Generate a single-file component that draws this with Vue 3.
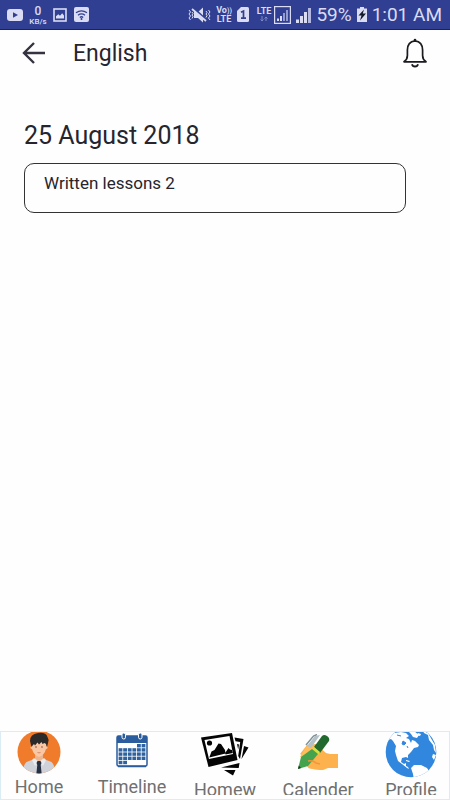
<script setup>
import { ref } from 'vue'

const entries = ref([
  { date: '25 August 2018', text: 'Written lessons 2' },
])

const tabs = [
  { id: 'home', label: 'Home' },
  { id: 'timeline', label: 'Timeline' },
  { id: 'homework', label: 'Homew' },
  { id: 'calender', label: 'Calender' },
  { id: 'profile', label: 'Profile' },
]

// day cells of the timeline icon, [first column, last column] per row
const dayRows = [[4, 5], [0, 5], [0, 5], [0, 5], [0, 1]]
const days = dayRows.flatMap(([from, to], row) =>
  Array.from({ length: to - from + 1 }, (_, i) => ({ x: 2.6 + (from + i) * 4.6, y: 12 + row * 4.2 })),
)
</script>

<template>
  <div class="app">
    <div class="status">
      <div class="status-left">
        <svg width="16" height="12" viewBox="0 0 16 12">
          <rect width="16" height="12" rx="3" fill="#d9dcf3" />
          <path d="M6 3.3 11 6 6 8.7z" fill="#313f92" />
        </svg>
        <div class="stack rate"><b>0</b><span>KB/s</span></div>
        <svg width="14" height="14" viewBox="0 0 14 14">
          <rect x="1" y="1" width="12" height="12" fill="none" stroke="#d9dcf3" stroke-width="1.6" />
          <path d="M3 10.5V8.3l2.3-2 1.7 1.4 2.2-2.5L11 7.5v3z" fill="#d9dcf3" />
        </svg>
        <svg width="15" height="15" viewBox="0 0 15 15">
          <rect width="15" height="15" rx="2" fill="#d9dcf3" />
          <g fill="none" stroke="#313f92" stroke-width="1.3">
            <path d="M2 5.8q5.5-4 11 0M4 8.2q3.5-2.6 7 0M5.8 10.4q1.7-1.3 3.4 0" />
          </g>
          <circle cx="7.5" cy="11.9" r="1" fill="#313f92" />
        </svg>
      </div>
      <div class="status-right">
        <svg width="23" height="16" viewBox="0 0 23 16">
          <path d="M6 5h4l5-4.500v15L10 11H6z" fill="#d9dcf3" />
          <path d="m5 1 14 13" stroke="#313f92" stroke-width="2.6" />
          <path d="m4 2 14 12" stroke="#d9dcf3" stroke-width="1.8" />
          <path d="m1 3 1.500 2L1 7l1.500 2L1 11l1.500 2M4 5l1 1.500L4 8l1 1.500-1 2M18 4l1 1.500L18 7l1 1.500-1 2M20.500 3 22 5l-1.500 2L22 9l-1.500 2 1.500 2" fill="none" stroke="#d9dcf3" />
        </svg>
        <div class="stack"><b>Vo<i>))</i></b><b>LTE</b></div>
        <svg class="sim" width="12" height="15" viewBox="0 0 12 15">
          <path d="M4 0h6.500Q12 0 12 1.500v12q0 1.500-1.500 1.500h-9Q0 15 0 13.500V4z" fill="#d9dcf3" />
          <path d="M4 5.200 6.500 4v7M4 11.200h5" fill="none" stroke="#313f92" stroke-width="1.7" />
        </svg>
        <div class="stack">
          <b>LTE</b>
          <svg width="10" height="7" viewBox="0 0 10 7">
            <path d="M3 1v5M1.500 4.500 3 6l1.500-1.500M7 6V2M5.500 3.500 7 2l1.500 1.500" fill="none" stroke="#7f88c4" />
          </svg>
        </div>
        <svg class="boxed" width="17" height="18" viewBox="0 0 17 18">
          <rect x=".6" y=".6" width="15.8" height="16.8" fill="none" stroke="#d9dcf3" stroke-width="1.2" />
          <path d="M3 12.500h2V15H3zM6 10h2v5H6z" fill="#d9dcf3" />
          <path d="M9 7h2v8H9zM12 4h2v11h-2z" fill="#929bd0" />
        </svg>
        <svg width="15" height="16" viewBox="0 0 15 16">
          <path d="M0 12.500h3V16H0zM4 9h3v7H4zM8 5h3v11H8z" fill="#d9dcf3" />
          <path d="M12 1h3v15h-3z" fill="#b2b8e2" />
        </svg>
        <span class="big">59%</span>
        <svg width="10" height="15" viewBox="0 0 10 15">
          <path d="M3 0h4v1.500h3V15H0V1.500h3z" fill="#d9dcf3" />
          <path d="M7 2.500 1.500 8.500h3L3 13.500l6-7H5.800z" fill="#111a28" />
        </svg>
        <span class="big">1:01 AM</span>
      </div>
    </div>

    <header class="topbar">
      <button class="icon-btn" type="button" aria-label="Back">
        <svg width="24" height="24" viewBox="0 0 24 24">
          <path d="M12 2 2 12l10 10M2 12h21" fill="none" stroke="#35333f" stroke-width="2.4" />
        </svg>
      </button>
      <h1>English</h1>
      <button class="icon-btn" type="button" aria-label="Notifications">
        <svg width="26" height="30" viewBox="0 0 26 30">
          <path d="M13 2.800C7.500 3.500 5.400 7.200 5.400 12v5.500c0 3-1 4.600-3.400 6.300h22c-2.400-1.700-3.400-3.300-3.400-6.300V12c0-4.800-2.100-8.500-7.600-9.200z" fill="none" stroke="#1b1b20" stroke-width="1.7" stroke-linejoin="round" />
          <circle cx="13" cy="2" r="1.3" fill="#1b1b20" />
          <path d="M10 26.200q.5 2.300 3 2.300t3-2.300" fill="none" stroke="#1b1b20" stroke-width="1.8" />
        </svg>
      </button>
    </header>

    <main>
      <section v-for="entry in entries" :key="entry.date">
        <h2>{{ entry.date }}</h2>
        <p class="card">{{ entry.text }}</p>
      </section>
    </main>

    <nav>
      <a v-for="tab in tabs" :key="tab.id" :href="'#' + tab.id" :class="tab.id">
        <span class="pic">
          <svg v-if="tab.id === 'home'" width="44" height="42" viewBox="0 0 44 42">
            <defs>
              <clipPath id="avatar"><circle cx="22" cy="20" r="21.5" /></clipPath>
            </defs>
            <g clip-path="url(#avatar)">
              <path d="M0 0h44v42H0z" fill="#ef7b2b" />
              <path d="M7 42v-8q1-4 5-5l6-2h8l6 2q4 1 5 5v8z" fill="#cfd2d8" />
              <path d="M18 21h8v6l-4 4-4-4z" fill="#edb48f" />
              <path d="m17 26 5 4-4 4-3-6zM27 26l-5 4 4 4 3-6z" fill="#e9ebef" />
              <path d="m20.500 29h3l1 2-.8 2 1 9h-5.400l1-9-.8-2z" fill="#273040" />
              <path d="M15 8h14v9q-1.500 6-7 8-5.500-2-7-8z" fill="#fac7a4" />
              <circle cx="15" cy="15.500" r="1.5" fill="#fac7a4" />
              <circle cx="29" cy="15.500" r="1.5" fill="#fac7a4" />
              <path d="M14.500 15 13 9q0-7 8-8 8-1 9.500 4 2 3 .5 6l-1 4-1-3-1.500-1-2 1-1-2-2.500 2.500-1.500-2-2.500 3-1-1.500-1 1z" fill="#2d2a2a" />
              <path d="M18 15h2M24 15h2" stroke="#8d5d43" />
              <path d="M20.500 20.500q1.500.8 3 0" fill="none" stroke="#d5866c" />
            </g>
          </svg>
          <svg v-else-if="tab.id === 'timeline'" width="32" height="36" viewBox="0 0 32 36">
            <rect x="1" y="4" width="30" height="30" rx="1.5" fill="#fff" stroke="#2a5c9e" stroke-width="1.5" />
            <path d="M1 4h30v7H1z" fill="#2a5c9e" />
            <path d="M2 34.500h28" stroke="#2a5c9e" stroke-width="1.5" />
            <rect x="6" y="1" width="3.5" height="6" rx="1.7" fill="#2a5c9e" stroke="#fff" />
            <rect x="22.5" y="1" width="3.5" height="6" rx="1.7" fill="#2a5c9e" stroke="#fff" />
            <rect v-for="(d, i) in days" :key="i" :x="d.x" :y="d.y" width="3.8" height="3.4" fill="#2d629f" />
          </svg>
          <svg v-else-if="tab.id === 'homework'" width="48" height="44" viewBox="0 0 48 44">
            <path d="M33.500 5.500 42.500 7 39 27l-1.800-3 2-14-4.700-.8zM36 12l2 .5-.8 5zM43 14l4.500 1.500L40.500 27zM20 35.500l18.500-4.500-.8 5zM23 38h11.500l-2.500 5.500z" fill="#050505" />
            <path d="M0 5.500 31 1l5.500 27L7.500 35z" fill="#050505" />
            <path d="m3.500 8 25-4 3.500 18L8 27z" fill="#fff" />
            <circle cx="8.500" cy="11" r="2.6" fill="#050505" />
            <path d="m8.300 25.500 2.200-6 3-1.500 4-6.500 2.500.5 4 6 .5 3.500zM24.500 20.500l3-4.500 1.500 1.500 2 .5.800 3-7.300 1.500z" fill="#050505" />
          </svg>
          <svg v-else-if="tab.id === 'calender'" width="42" height="36" viewBox="0 0 42 36">
            <path d="M3 20 10 11l9-1 10 9 4 1h8v14H31l-5 2q-7 0-10-1-5 0-6-3l4-6z" fill="#fdb24e" />
            <path d="m3 23 7-11 5-1 4 3-8 10z" fill="#ffbd5c" />
            <path d="m9 11 7.500-9L20 .5" fill="none" stroke="#7d929b" stroke-width="1.5" />
            <path d="M10 12 18 2l5-1-9 13z" fill="#b4c1c7" />
            <path d="m17 13 8-11q2-2 5 0t2 5l-9 12z" fill="#22692e" />
            <path d="m15 16 2-3 6 5-2 3z" fill="#d5df3e" />
            <path d="m1 35 3-12 11-8 6 5-10 12z" fill="#45a34e" />
            <path d="m1 35 .8-3.500L4 34z" fill="#18361e" />
            <path d="M11 27q5-1 8 2l4 1" fill="none" stroke="#f1963c" stroke-width="1.5" />
          </svg>
          <svg v-else width="52" height="46" viewBox="0 0 52 46">
            <defs>
              <clipPath id="earth"><circle cx="26" cy="20" r="25.3" /></clipPath>
            </defs>
            <g clip-path="url(#earth)">
              <path d="M0 0h52v46H0z" fill="#3187dd" />
              <g fill="#fff">
                <path d="M4 6 9 1l7-1 5 1 3 3-3 2 3 1 2 4 1-3 3 1 4 4-1 2-4 1-3 4-3 3v3l-2-1-4 1-1 4 3 2 2-1v3l2 1 1 2-2-1-5-4-4-3-2-6-1-4 1-5-3-5-2-2-3 1z" />
                <path d="m24 0 5-1 5 4-2 3-4-1-2-3zM33 1l3 1-1 2-3-1zM21 28l4 1-1 1-3-1zM26 36l3-3h7l6 3 2 3-3 2-5 7h-7l-1-6z" />
                <path d="m38-1 5 2 4 7 3 5 1 8-2-3-1-5-4-5-1-5-4-2zM48 22l3 1-2 5-2-3z" />
              </g>
              <path d="m18 9 3 2-2 2-2-1zM12 3l4 1M22 14l1 2" fill="#3187dd" stroke="#3187dd" />
            </g>
          </svg>
        </span>
        <span class="label">{{ tab.label }}</span>
      </a>
    </nav>
  </div>
</template>

<style>
body {
  background: #fefefe;
}
</style>

<style scoped>
.app {
  display: flex;
  flex-direction: column;
  min-height: 100vh;
  font-family: Roboto, sans-serif;
  color: #26252e;
}

svg {
  display: block;
  flex: none;
}

.status {
  display: flex;
  align-items: center;
  justify-content: space-between;
  box-sizing: border-box;
  height: 30px;
  padding: 0 8px 0 7px;
  background: #313f92;
  border-bottom: 1px solid #16207a;
  color: #d9dcf3;
}

.status-left,
.status-right {
  display: flex;
  align-items: center;
}

.status-left {
  gap: 7px;
}

.status-right {
  gap: 5px;
}

.stack {
  display: flex;
  flex-direction: column;
  align-items: center;
  font-size: 9px;
  line-height: 8px;
}

.stack i {
  font-style: normal;
  font-size: 7px;
}

.rate {
  width: 16px;
}

.rate span {
  font-size: 8px;
  font-weight: 500;
}

.rate b {
  font-size: 12px;
  font-weight: 500;
  line-height: 14px;
}

.sim {
  margin-right: 3px;
}

.boxed {
  margin-left: -2px;
}

.big {
  font-size: 19px;
  line-height: 24px;
}

.topbar {
  display: flex;
  align-items: center;
  height: 46px;
  padding: 0 22px;
}

.icon-btn {
  padding: 0;
  border: 0;
  background: none;
}

h1 {
  flex: 1;
  margin: 0;
  padding: 2px 0 0 27px;
  font-size: 23px;
  font-weight: 400;
  line-height: 28px;
}

main {
  flex: 1;
  padding: 45px 44px 0 24px;
}

h2 {
  margin: 0 0 12px;
  font-size: 25px;
  font-weight: 400;
  line-height: 30px;
}

.card {
  box-sizing: border-box;
  min-height: 50px;
  margin: 0;
  padding: 9px 19px;
  border: 1px solid #333;
  border-radius: 10px;
  font-size: 17px;
  line-height: 20px;
}

nav {
  display: flex;
  justify-content: space-between;
  padding: 0 4px 4px;
  border: 1px solid #dcecf5;
}

nav a {
  display: flex;
  flex-direction: column;
  align-items: center;
  width: 68px;
  height: 63px;
  overflow-x: visible;
  overflow-y: clip;
  color: #707070;
  text-decoration: none;
}

.pic {
  display: flex;
  flex: none;
  align-items: flex-start;
  justify-content: center;
  box-sizing: border-box;
  height: 47px;
}

.home .pic,
.timeline .pic {
  height: 44px;
}

.calender .pic {
  padding-top: 2px;
}

.label {
  font-size: 18px;
  line-height: 21px;
}
</style>
